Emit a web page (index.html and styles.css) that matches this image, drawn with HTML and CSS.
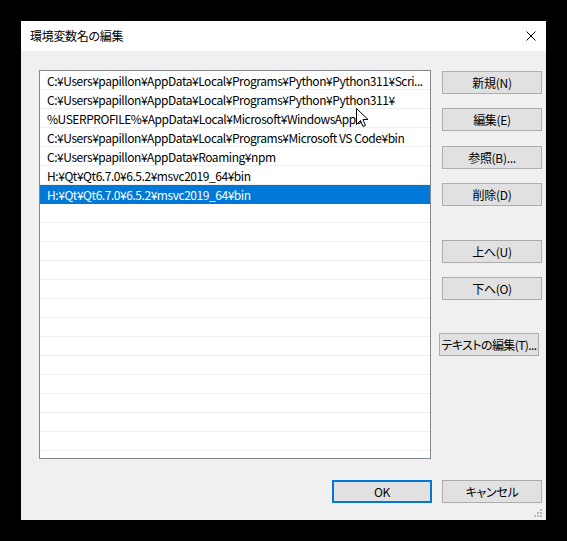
FILE: index.html
```html
<!DOCTYPE html>
<html lang="ja">
<head>
<meta charset="utf-8">
<title>環境変数名の編集</title>
<link rel="stylesheet" href="styles.css">
</head>
<body>
<div class="dialog">
  <div class="titlebar">
    <span class="title">環境変数名の編集</span>
    <svg class="close" width="10" height="10" viewBox="0 0 10 10"><path d="M0.5 0.5 L9.5 9.5 M9.5 0.5 L0.5 9.5" stroke="#000" stroke-width="1" fill="none"/></svg>
  </div>
  <div class="body">
    <div class="main">
      <div class="list">
        <div class="row">C:¥Users¥papillon¥AppData¥Local¥Programs¥Python¥Python311¥Scri...</div>
        <div class="row">C:¥Users¥papillon¥AppData¥Local¥Programs¥Python¥Python311¥</div>
        <div class="row">%USERPROFILE%¥AppData¥Local¥Microsoft¥WindowsApps</div>
        <div class="row">C:¥Users¥papillon¥AppData¥Local¥Programs¥Microsoft VS Code¥bin</div>
        <div class="row">C:¥Users¥papillon¥AppData¥Roaming¥npm</div>
        <div class="row">H:¥Qt¥Qt6.7.0¥6.5.2¥msvc2019_64¥bin</div>
        <div class="row selected">H:¥Qt¥Qt6.7.0¥6.5.2¥msvc2019_64¥bin</div>
        <div class="row"></div><div class="row"></div><div class="row"></div>
        <div class="row"></div><div class="row"></div><div class="row"></div>
        <div class="row"></div><div class="row"></div><div class="row"></div>
        <div class="row"></div><div class="row"></div><div class="row"></div>
        <div class="row"></div>
      </div>
      <div class="side">
        <button class="btn">新規(N)</button>
        <button class="btn g1">編集(E)</button>
        <button class="btn g2">参照(B)...</button>
        <button class="btn g1">削除(D)</button>
        <button class="btn g3">上へ(U)</button>
        <button class="btn g1">下へ(O)</button>
        <button class="btn g4 wide">テキストの編集(T)...</button>
      </div>
    </div>
    <div class="footer">
      <button class="btn ok">OK</button>
      <button class="btn">キャンセル</button>
    </div>
    <svg class="grip" width="9" height="9" viewBox="0 0 9 9">
      <rect x="6" y="0" width="2" height="2" fill="#b8b8b8"/>
      <rect x="3" y="3" width="2" height="2" fill="#b8b8b8"/>
      <rect x="6" y="3" width="2" height="2" fill="#b8b8b8"/>
      <rect x="0" y="6" width="2" height="2" fill="#b8b8b8"/>
      <rect x="3" y="6" width="2" height="2" fill="#b8b8b8"/>
      <rect x="6" y="6" width="2" height="2" fill="#b8b8b8"/>
    </svg>
  </div>
  <svg class="cursor" width="13" height="20" viewBox="0 0 13 20">
    <path d="M0.5 0.5 L0.5 16.5 L4.5 12.5 L7 18.5 L9.5 17.5 L7 11.5 L12 11.5 Z" fill="#fff" stroke="#000" stroke-width="1" stroke-linejoin="miter"/>
  </svg>
</div>
</body>
</html>
```
FILE: styles.css
```css
html, body {
  margin: 0;
  padding: 0;
  background: #000;
}
body {
  width: 567px;
  height: 541px;
  overflow: hidden;
  font-family: "Noto Sans CJK JP", "Noto Sans", sans-serif;
  font-size: 12px;
  font-feature-settings: "palt";
  color: #000;
}
.dialog {
  position: relative;
  margin: 21px 0 0 21px;
  width: 525px;
  height: 499px;
  background: #f0f0f0;
  display: flex;
  flex-direction: column;
}
.titlebar {
  height: 30px;
  background: #fff;
  display: flex;
  align-items: center;
  justify-content: space-between;
  padding: 0 10px 0 9px;
}
.title {
  font-size: 12px;
  line-height: 16px;
  letter-spacing: -0.3px;
}
.close {
  display: block;
}
.body {
  position: relative;
  flex: 1;
  padding: 19px 0 0 18px;
}
.main {
  display: flex;
  align-items: flex-start;
}
.list {
  width: 390px;
  height: 387px;
  border: 1px solid #828790;
  background: #fff;
  overflow: hidden;
}
.row {
  box-sizing: border-box;
  height: 19px;
  line-height: 18px;
  padding-top: 1px;
  border-bottom: 1px solid #efefef;
  padding-left: 7px;
  letter-spacing: -0.45px;
  white-space: nowrap;
  overflow: hidden;
}
.row.selected {
  background: #0078d7;
  color: #fff;
  border-bottom-color: #0078d7;
}
.side {
  display: flex;
  flex-direction: column;
  margin-left: 11px;
  padding-top: 1px;
}
.btn {
  box-sizing: border-box;
  width: 100px;
  height: 23px;
  background: #e1e1e1;
  border: 1px solid #adadad;
  font-family: inherit;
  font-size: 12px;
  font-feature-settings: "palt";
  letter-spacing: -0.3px;
  color: #000;
  padding: 0;
  line-height: 20px;
  white-space: nowrap;
}
.g1 { margin-top: 14px; }
.g2 { margin-top: 15px; }
.g3 { margin-top: 34px; }
.g4 { margin-top: 33px; margin-left: -3px; }
.wide { letter-spacing: -0.6px; }
.footer {
  display: flex;
  gap: 10px;
  justify-content: flex-end;
  margin-top: 21px;
  padding-right: 4px;
}
.btn.ok {
  border: 2px solid #0078d7;
}
.grip {
  position: absolute;
  right: 3px;
  bottom: 2px;
}
.cursor {
  position: absolute;
  left: 335px;
  top: 87px;
}
```
